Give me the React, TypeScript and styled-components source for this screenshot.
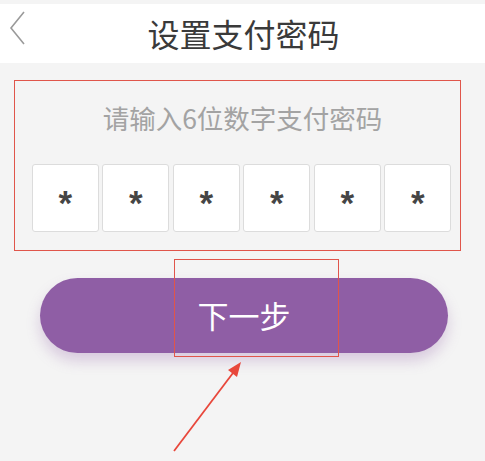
import styled, { createGlobalStyle } from 'styled-components'

const GlobalStyle = createGlobalStyle`
  body {
    margin: 0;
    background: #f4f4f4;
    font-family: "Noto Sans CJK SC", "Noto Sans", sans-serif;
  }
`

const Page = styled.div`
  width: 485px;
  height: 461px;
  overflow: hidden;
  display: flex;
  flex-direction: column;
  background: #f4f4f4;
`

const Header = styled.header`
  margin-top: 4px;
  height: 59px;
  background: #ffffff;
  display: flex;
  align-items: center;
  justify-content: center;
  position: relative;
`

const BackButton = styled.button`
  position: absolute;
  left: 5px;
  top: 6px;
  width: 24px;
  height: 36px;
  padding: 0;
  border: none;
  background: none;
  display: flex;
  align-items: center;
  justify-content: center;
`

const Title = styled.h1`
  margin: 0;
  font-size: 32px;
  font-weight: 400;
  color: #3a3a3a;
  transform: translate(1px, -1px);
`

const PinSection = styled.section`
  margin: 17px 0 0 14px;
  width: 447px;
  height: 171px;
  box-sizing: border-box;
  border: 1.5px solid #e0554b;
  display: flex;
  flex-direction: column;
  align-items: center;
`

const Hint = styled.p`
  margin: 21px 0 0;
  font-size: 26.5px;
  line-height: 32px;
  color: #a3a3a3;
  transform: translateX(5px);
`

const Cells = styled.div`
  margin: 30px 0 0 8px;
  display: flex;
  gap: 3.5px;
`

const Cell = styled.div`
  width: 67px;
  height: 68px;
  box-sizing: border-box;
  background: #ffffff;
  border: 1px solid #dcdcdc;
  border-radius: 3px;
  display: flex;
  justify-content: center;
  align-items: center;
`

const Star = styled.span`
  font-family: "Liberation Sans", Arial, sans-serif;
  font-weight: 700;
  font-size: 35px;
  line-height: 1;
  color: #454545;
  transform: translateY(4px);
`

const ButtonArea = styled.div`
  position: relative;
  flex: 1;
  display: flex;
  justify-content: center;
  padding-top: 27px;
`

const NextButton = styled.button`
  width: 408px;
  height: 75px;
  margin-left: 3px;
  border: none;
  border-radius: 38px;
  background: #8f5ea5;
  color: #ffffff;
  font-family: "Noto Sans CJK SC", "Noto Sans", sans-serif;
  font-size: 31px;
  padding-bottom: 4px;
  box-shadow: 0 8px 14px rgba(142, 94, 166, 0.28);
  cursor: pointer;
`

const Highlight = styled.div`
  position: absolute;
  left: 174px;
  top: 8px;
  width: 165px;
  height: 98px;
  box-sizing: border-box;
  border: 1.5px solid #e0554b;
  pointer-events: none;
`

const Arrow = styled.svg`
  position: absolute;
  left: 170px;
  top: 106px;
`

function App() {
  const digits = ['*', '*', '*', '*', '*', '*']

  return (
    <>
      <GlobalStyle />
      <Page>
        <Header>
          <BackButton aria-label="返回">
            <svg width="18" height="34" viewBox="0 0 18 34">
              <path d="M16 1 L3 17 L16 33" fill="none" stroke="#9a9a9a" strokeWidth="1.6" />
            </svg>
          </BackButton>
          <Title>设置支付密码</Title>
        </Header>
        <PinSection>
          <Hint>请输入6位数字支付密码</Hint>
          <Cells>
            {digits.map((d, i) => (
              <Cell key={i}>
                <Star>{d}</Star>
              </Cell>
            ))}
          </Cells>
        </PinSection>
        <ButtonArea>
          <NextButton>下一步</NextButton>
          <Highlight />
          <Arrow width="80" height="100" viewBox="0 0 80 100">
            <path d="M4 94 L66 12" stroke="#e8473b" strokeWidth="1.8" fill="none" />
            <path d="M71 5 L58 13 L67 20 Z" fill="#e8473b" />
          </Arrow>
        </ButtonArea>
      </Page>
    </>
  )
}

export default App
